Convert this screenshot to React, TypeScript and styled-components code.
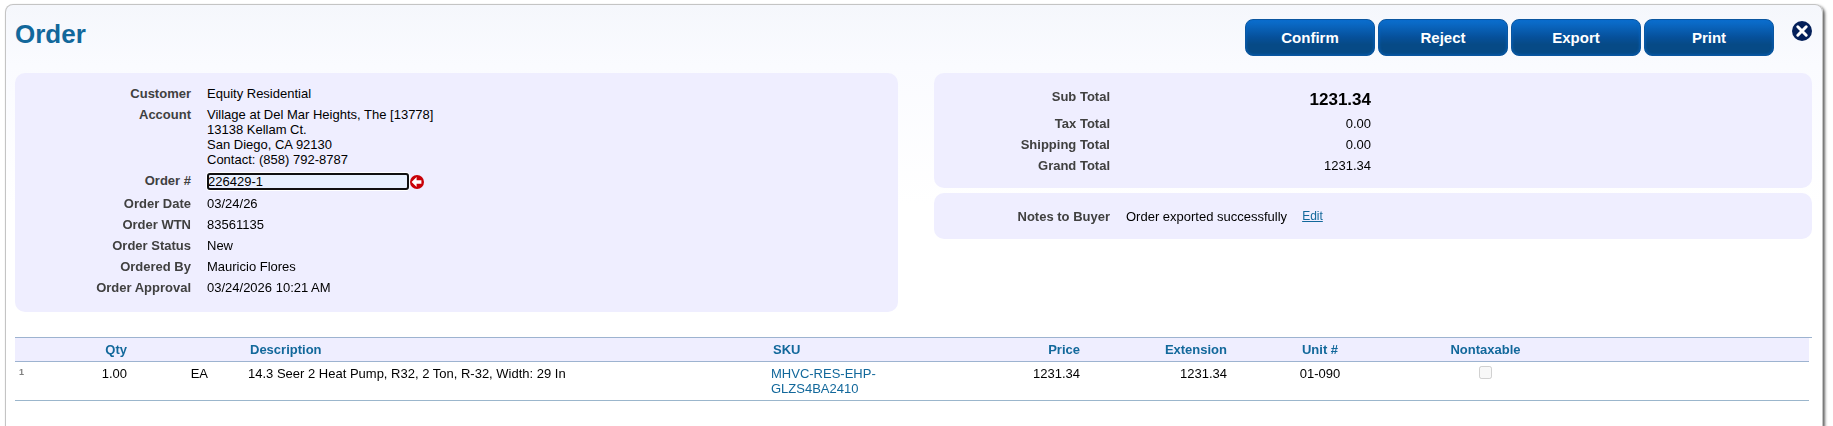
import React from "react";
import styled, { createGlobalStyle } from "styled-components";

const GlobalStyle = createGlobalStyle`
  * { box-sizing: border-box; }
  body {
    margin: 0;
    background: #fff;
    color: #000;
    font: 13px/15px "Liberation Sans", Arial, sans-serif;
  }
`;

const Page = styled.div`
  display: flex;
  min-height: 100vh;
  padding: 4px 10px 0 5px;
  overflow: hidden;
`;

const Frame = styled.main`
  flex: 1;
  padding: 0 10px 24px 9px;
  border: 1px solid #c4c4c4;
  border-bottom: 0;
  border-radius: 8px 8px 0 0;
  box-shadow: 2px 2px 3px #666;
  background: linear-gradient(#f5f7fc 0, #fafbff 60px, #fff 200px);
`;

const Header = styled.header`
  display: flex;
  align-items: flex-start;
  height: 68px;
  padding-top: 14px;
`;

const Title = styled.h1`
  flex: 1;
  margin: 0;
  color: #12689b;
  font-size: 26px;
  line-height: 30px;
`;

const Actions = styled.div`
  display: flex;
  gap: 3px;
  margin-right: 18px;
`;

const ActionButton = styled.button`
  width: 130px;
  height: 37px;
  padding: 0;
  border: 1px solid #0a56a0;
  border-radius: 8px;
  background: linear-gradient(#0b6fd0, #06509a 50%, #064a86 70%, #064a86);
  box-shadow: inset 0 0 3px #0a68c4;
  color: #fff;
  font: bold 15px/17px "Liberation Sans", Arial, sans-serif;
`;

const CloseButton = styled.button`
  display: block;
  width: 20px;
  height: 20px;
  margin-top: 2px;
  padding: 0;
  border: 0;
  background: none;
`;

const Summary = styled.div`
  display: grid;
  grid-template-columns: 883fr 878fr;
  gap: 36px;
  align-items: start;
`;

const Stack = styled.div`
  display: grid;
  gap: 5px;
`;

const Panel = styled.section<{ $pad: string }>`
  padding: ${(p) => p.$pad};
  border-radius: 10px;
  background: #efeeff;
`;

const Field = styled.div`
  display: flex;
  gap: 16px;
  padding: 3px 0;
`;

const Label = styled.label`
  width: 176px;
  color: #404040;
  font-weight: bold;
  text-align: right;
`;

const Value = styled.div`
  display: flex;
  align-items: center;
  gap: 1px;
`;

const OrderInput = styled.input`
  width: 202px;
  height: 17px;
  padding: 0 0 0 1px;
  border: 0;
  border-radius: 3px;
  outline: 2px solid #101010;
  outline-offset: -2px;
  box-shadow: 0 0 0 1px #fff;
  background: #e8f0fe;
  color: #000;
  font: 13px/15px "Liberation Sans", Arial, sans-serif;
`;

const UndoButton = styled.button`
  display: block;
  width: 14px;
  height: 14px;
  padding: 0;
  border: 0;
  background: none;
`;

const Amount = styled.div<{ $large?: boolean }>`
  width: 245px;
  text-align: right;
  ${(p) => p.$large && "padding: 1px 0; font-weight: bold; font-size: 17px; line-height: 19px;"}
`;

const EditLink = styled.a`
  margin-left: 14px;
  color: #12689b;
  font-size: 12px;
`;

const TableWrap = styled.div`
  margin-top: 25px;
  border-top: 1px solid #9db3d0;
`;

const Table = styled.table`
  width: calc(100% - 3px);
  border-collapse: separate;
  border-spacing: 0;
  table-layout: fixed;
`;

type Align = "left" | "right" | "center";

const Th = styled.th<{ $align?: Align; $indent?: boolean }>`
  height: 24px;
  padding: 0 4px 0 ${(p) => (p.$indent ? 38 : p.$align === "left" ? 6 : 4)}px;
  border-bottom: 1px solid #9db3d0;
  background: #efeeff;
  color: #12689b;
  text-align: ${(p) => p.$align ?? "left"};
`;

const Td = styled.td<{ $align?: Align; $indent?: boolean }>`
  height: 39px;
  padding: 4px 4px 4px ${(p) => (p.$indent ? 36 : 4)}px;
  border-bottom: 1px solid #9bb6cc;
  text-align: ${(p) => p.$align ?? "left"};
  vertical-align: top;
`;

const RowNumber = styled.span`
  display: block;
  color: #808080;
  font-weight: bold;
  font-size: 9px;
  line-height: 12px;
`;

const SkuLink = styled.a`
  color: #12689b;
  text-decoration: none;
`;

const Check = styled.input`
  display: block;
  width: 13px;
  height: 13px;
  margin: 0 auto;
`;

const details = [
  ["Order Date", "03/24/26"],
  ["Order WTN", "83561135"],
  ["Order Status", "New"],
  ["Ordered By", "Mauricio Flores"],
  ["Order Approval", "03/24/2026 10:21 AM"],
];

const totals = [
  ["Tax Total", "0.00"],
  ["Shipping Total", "0.00"],
  ["Grand Total", "1231.34"],
];

export default function App() {
  return (
    <>
      <GlobalStyle />
      <Page>
        <Frame>
          <Header>
            <Title>Order</Title>
            <Actions>
              {["Confirm", "Reject", "Export", "Print"].map((name) => (
                <ActionButton key={name} type="button">{name}</ActionButton>
              ))}
            </Actions>
            <CloseButton type="button" aria-label="Close">
              <svg width="20" height="20" viewBox="0 0 20 20">
                <circle cx="10" cy="10" r="10" fill="#04205a" />
                <path d="M5.8 5.8l8.4 8.4M14.2 5.8l-8.4 8.4" stroke="#fff" strokeWidth="3" strokeLinecap="round" />
              </svg>
            </CloseButton>
          </Header>

          <Summary>
            <Panel $pad="10px 0 14px">
              <Field>
                <Label as="div">Customer</Label>
                <Value>Equity Residential</Value>
              </Field>
              <Field>
                <Label as="div">Account</Label>
                <div>
                  Village at Del Mar Heights, The [13778]<br />
                  13138 Kellam Ct.<br />
                  San Diego, CA 92130<br />
                  Contact: (858) 792-8787
                </div>
              </Field>
              <Field>
                <Label htmlFor="order-number">Order #</Label>
                <Value>
                  <OrderInput id="order-number" type="text" defaultValue="226429-1" autoFocus />
                  <UndoButton type="button" aria-label="Restore order number">
                    <svg width="14" height="14" viewBox="0 0 14 14">
                      <circle cx="7" cy="7" r="7" fill="#c80008" />
                      <path d="M1.6 7l5-5v3.2h4.8v3.6H6.6V12z" fill="#fff" />
                    </svg>
                  </UndoButton>
                </Value>
              </Field>
              {details.map(([label, value]) => (
                <Field key={label}>
                  <Label as="div">{label}</Label>
                  <Value>{value}</Value>
                </Field>
              ))}
            </Panel>

            <Stack>
              <Panel $pad="13px 0 12px">
                <Field>
                  <Label as="div">Sub Total</Label>
                  <Amount $large>1231.34</Amount>
                </Field>
                {totals.map(([label, value]) => (
                  <Field key={label}>
                    <Label as="div">{label}</Label>
                    <Amount>{value}</Amount>
                  </Field>
                ))}
              </Panel>
              <Panel $pad="13px 0 12px">
                <Field>
                  <Label as="div">Notes to Buyer</Label>
                  <Value>
                    Order exported successfully
                    <EditLink href="#notes">Edit</EditLink>
                  </Value>
                </Field>
              </Panel>
            </Stack>
          </Summary>

          <TableWrap>
            <Table>
              <colgroup>
                {[40, 76, 81, undefined, 148, 169, 147, 178, 153, 247].map((width, i) => (
                  <col key={i} width={width} />
                ))}
              </colgroup>
              <thead>
                <tr>
                  <Th />
                  <Th $align="right">Qty</Th>
                  <Th />
                  <Th $align="left" $indent>Description</Th>
                  <Th $align="left">SKU</Th>
                  <Th $align="right">Price</Th>
                  <Th $align="right">Extension</Th>
                  <Th $align="center">Unit #</Th>
                  <Th $align="center">Nontaxable</Th>
                  <Th />
                </tr>
              </thead>
              <tbody>
                <tr>
                  <Td><RowNumber>1</RowNumber></Td>
                  <Td $align="right">1.00</Td>
                  <Td $align="right">EA</Td>
                  <Td $indent>14.3 Seer 2 Heat Pump, R32, 2 Ton, R-32, Width: 29 In</Td>
                  <Td><SkuLink href="#sku">MHVC-RES-EHP-GLZS4BA2410</SkuLink></Td>
                  <Td $align="right">1231.34</Td>
                  <Td $align="right">1231.34</Td>
                  <Td $align="center">01-090</Td>
                  <Td $align="center"><Check type="checkbox" disabled aria-label="Nontaxable" /></Td>
                  <Td />
                </tr>
              </tbody>
            </Table>
          </TableWrap>
        </Frame>
      </Page>
    </>
  );
}
